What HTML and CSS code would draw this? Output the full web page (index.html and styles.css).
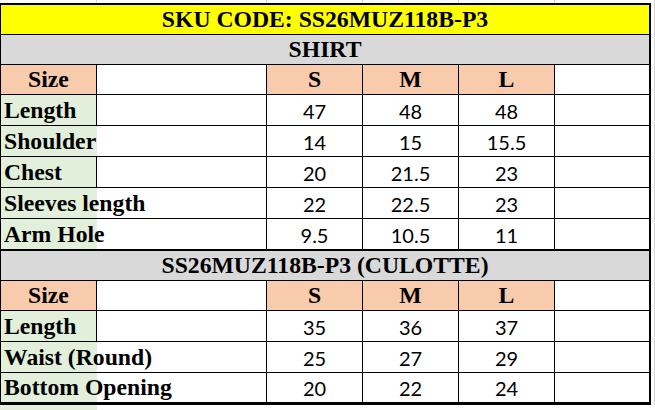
FILE: index.html
```html
<!DOCTYPE html>
<html>
<head>
<meta charset="utf-8">
<link rel="stylesheet" href="styles.css">
</head>
<body>
<div class="topstrip"><span></span><span></span><span></span><span></span><span></span><span></span></div>
<div class="main">
  <div class="sheet">
    <div class="row r30"><div class="cell full title">SKU CODE: SS26MUZ118B-P3</div></div>
    <div class="row r30"><div class="cell full section">SHIRT</div></div>
    <div class="row r30">
      <div class="cell head">Size</div><div class="cell"></div><div class="cell head">S</div><div class="cell head">M</div><div class="cell head">L</div><div class="cell last"></div>
    </div>
    <div class="row r31">
      <div class="cell label">Length</div><div class="cell"></div><div class="cell num">47</div><div class="cell num">48</div><div class="cell num">48</div><div class="cell last"></div>
    </div>
    <div class="row r31">
      <div class="cell label open">Shoulder</div><div class="cell"></div><div class="cell num">14</div><div class="cell num">15</div><div class="cell num">15.5</div><div class="cell last"></div>
    </div>
    <div class="row r31">
      <div class="cell label">Chest</div><div class="cell"></div><div class="cell num">20</div><div class="cell num">21.5</div><div class="cell num">23</div><div class="cell last"></div>
    </div>
    <div class="row r31">
      <div class="cell label open">Sleeves length</div><div class="cell"></div><div class="cell num">22</div><div class="cell num">22.5</div><div class="cell num">23</div><div class="cell last"></div>
    </div>
    <div class="row r32 thick">
      <div class="cell label open">Arm Hole</div><div class="cell"></div><div class="cell num">9.5</div><div class="cell num">10.5</div><div class="cell num">11</div><div class="cell last"></div>
    </div>
    <div class="row r30"><div class="cell full section">SS26MUZ118B-P3 (CULOTTE)</div></div>
    <div class="row r30">
      <div class="cell head">Size</div><div class="cell"></div><div class="cell head">S</div><div class="cell head">M</div><div class="cell head">L</div><div class="cell last"></div>
    </div>
    <div class="row r31">
      <div class="cell label">Length</div><div class="cell"></div><div class="cell num">35</div><div class="cell num">36</div><div class="cell num">37</div><div class="cell last"></div>
    </div>
    <div class="row r31">
      <div class="cell label open">Waist (Round)</div><div class="cell"></div><div class="cell num">25</div><div class="cell num">27</div><div class="cell num">29</div><div class="cell last"></div>
    </div>
    <div class="row r29 end">
      <div class="cell label open">Bottom Opening</div><div class="cell"></div><div class="cell num">20</div><div class="cell num">22</div><div class="cell num">24</div><div class="cell last"></div>
    </div>
  </div>
  <div class="gutter"></div>
</div>
<div class="below"><span></span></div>
</body>
</html>
```

FILE: styles.css
```css
html, body {
  margin: 0;
  padding: 0;
  background: #ffffff;
}
body {
  width: 655px;
  height: 410px;
  overflow: hidden;
}
.topstrip {
  height: 3px;
  display: grid;
  grid-template-columns: 97px 170px 96px 96px 96px 100px;
}
.topstrip span {
  box-sizing: border-box;
  border-right: 1px solid #d4d4d4;
}
.main {
  display: flex;
}
.sheet {
  width: 651px;
  box-sizing: border-box;
  border-left: 1px solid #000;
  border-right: 2px solid #000;
  border-top: 2px solid #000;
  border-bottom: 3px solid #000;
}
.gutter {
  width: 4px;
  box-sizing: border-box;
  border-right: 1px solid #d4d4d4;
}
.row {
  display: grid;
  grid-template-columns: 96px 170px 96px 96px 96px 94px;
  box-sizing: border-box;
  border-bottom: 1px solid #000;
}
.row.thick { border-bottom-width: 2px; }
.row.end { border-bottom: none; }
.r29 { height: 29px; }
.r30 { height: 30px; }
.r31 { height: 31px; }
.r32 { height: 32px; }
.cell {
  box-sizing: border-box;
  border-right: 1px solid #000;
  display: flex;
  align-items: flex-end;
  white-space: nowrap;
  color: #000;
  min-width: 0;
}
.cell.last { border-right: none; }
.full {
  grid-column: 1 / -1;
  border-right: none;
  justify-content: center;
  font: bold 23.7px/23.7px "Liberation Serif", "Times New Roman", serif;
  padding-bottom: 2px;
}
.title { background: #ffff00; }
.section { background: #d9d9d9; }
.head {
  background: #f8cbad;
  justify-content: center;
  font: bold 23.7px/23.7px "Liberation Serif", "Times New Roman", serif;
  padding-bottom: 2px;
}
.label {
  background: #e2efda;
  font: bold 23.7px/23.7px "Liberation Serif", "Times New Roman", serif;
  padding-left: 3px;
  padding-bottom: 2.2px;
  overflow: visible;
}
.label.open { border-right-color: transparent; }
.num {
  justify-content: center;
  font: 20px/20px Lato, "Open Sans", sans-serif;
  padding-bottom: 3.7px;
}
.below {
  display: grid;
  grid-template-columns: 97px;
}
.below span {
  height: 6px;
  background: #e2efda;
}
```
